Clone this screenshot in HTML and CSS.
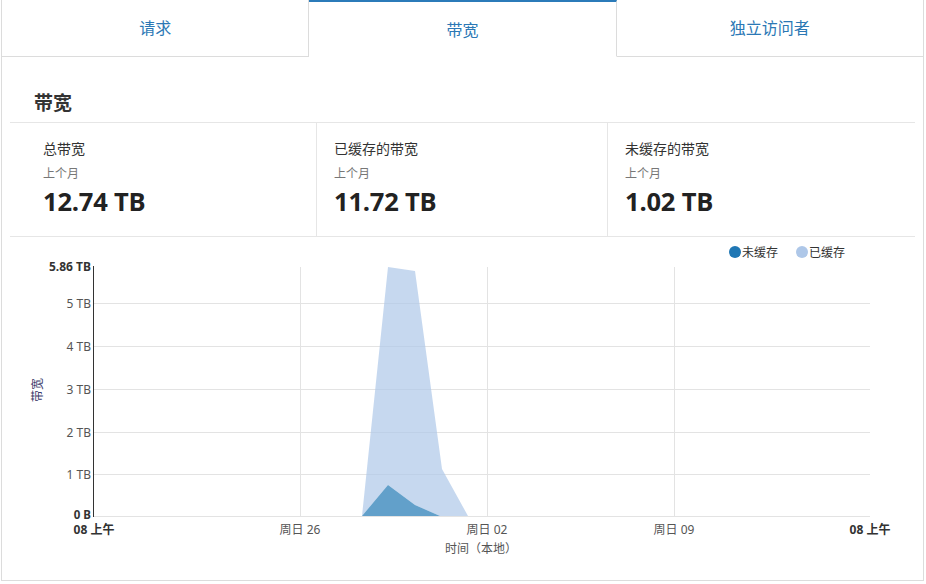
FILE: index.html
```html
<!DOCTYPE html>
<html lang="zh-CN">
<head>
<meta charset="utf-8">
<title>带宽</title>
<link rel="stylesheet" href="styles.css">
</head>
<body>
<div class="wrap">
  <div class="tabs">
    <div class="tab first">请求</div>
    <div class="tab active">带宽</div>
    <div class="tab last">独立访问者</div>
  </div>
  <div class="panel">
    <h2 class="title">带宽</h2>
    <div class="stats">
      <div class="stat s1">
        <div class="label">总带宽</div>
        <div class="sub">上个月</div>
        <div class="num">12.74 TB</div>
      </div>
      <div class="stat">
        <div class="label">已缓存的带宽</div>
        <div class="sub">上个月</div>
        <div class="num">11.72 TB</div>
      </div>
      <div class="stat">
        <div class="label">未缓存的带宽</div>
        <div class="sub">上个月</div>
        <div class="num">1.02 TB</div>
      </div>
    </div>
    <svg class="chart" width="904" height="343" viewBox="10 237 904 343" xmlns="http://www.w3.org/2000/svg">
      <g class="legend">
        <circle cx="735" cy="252" r="6" fill="#1f77b4"/>
        <text x="742" y="256.5">未缓存</text>
        <circle cx="802" cy="252" r="6" fill="#aec7e8"/>
        <text x="809" y="256.5">已缓存</text>
      </g>
      <g class="grid">
        <line x1="93" y1="303.5" x2="870" y2="303.5"/>
        <line x1="93" y1="346.5" x2="870" y2="346.5"/>
        <line x1="93" y1="389.5" x2="870" y2="389.5"/>
        <line x1="93" y1="432.5" x2="870" y2="432.5"/>
        <line x1="93" y1="474.5" x2="870" y2="474.5"/>
        <line x1="93" y1="516.5" x2="870" y2="516.5"/>
        <line x1="300.5" y1="267" x2="300.5" y2="516"/>
        <line x1="487.5" y1="267" x2="487.5" y2="516"/>
        <line x1="674.5" y1="267" x2="674.5" y2="516"/>
      </g>
      <polygon class="cached" points="362,516 388,267 415,271 442,469 468,516 440,516 415,505 388,485"/>
      <polygon class="uncached" points="362,516 388,485 415,505 440,516"/>
      <line class="axis" x1="93.5" y1="266" x2="93.5" y2="517"/>
      <g class="ylab">
        <text class="b" x="91" y="271">5.86 TB</text>
        <text x="91" y="307.5">5 TB</text>
        <text x="91" y="350.5">4 TB</text>
        <text x="91" y="393.5">3 TB</text>
        <text x="91" y="436.5">2 TB</text>
        <text x="91" y="478.5">1 TB</text>
        <text class="b zero" x="91" y="519">0 B</text>
      </g>
      <g class="xlab">
        <text class="b" x="94" y="534">08 上午</text>
        <text x="300" y="534">周日 26</text>
        <text x="487" y="534">周日 02</text>
        <text x="674" y="534">周日 09</text>
        <text class="b" x="870" y="534">08 上午</text>
      </g>
      <text class="xtitle" x="481" y="552.5">时间（本地）</text>
      <text class="ytitle" transform="translate(42 390) rotate(-90)">带宽</text>
    </svg>
  </div>
</div>
</body>
</html>
```

FILE: styles.css
```css
* { box-sizing: border-box; }
html, body { margin: 0; padding: 0; background: #fff; }
body {
  font-family: "Noto Sans", "Noto Sans CJK SC", sans-serif;
  color: #333;
}
.wrap {
  width: 923px;
  margin-left: 1px;
}
.tabs {
  display: flex;
  height: 57px;
}
.tab {
  flex: 1;
  display: flex;
  align-items: center;
  justify-content: center;
  font-family: "Noto Sans CJK SC", sans-serif;
  font-size: 16px;
  color: #2b78b5;
  background: #fff;
  border-bottom: 1px solid #dcdcdc;
  border-right: 1px solid #dcdcdc;
  padding-bottom: 2px;
}
.tab.first { border-left: 1px solid #dcdcdc; }
.tab.active {
  border-top: 2px solid #2b7bb9;
  border-bottom-color: #fff;
  padding-bottom: 0;
}
.panel {
  border: 1px solid #dcdcdc;
  border-top: none;
  padding: 0 8px;
  height: 524px;
}
.title {
  margin: 0;
  padding: 33px 0 0 24px;
  height: 65px;
  font-family: "Noto Sans CJK SC", sans-serif;
  font-size: 19px;
  line-height: 24px;
  font-weight: 700;
  color: #333;
}
.stats {
  display: grid;
  grid-template-columns: 306px 291px 1fr;
  border-top: 1px solid #e6e6e6;
  border-bottom: 1px solid #e6e6e6;
  height: 115px;
}
.stat {
  padding: 15px 0 0 17px;
  border-left: 1px solid #e6e6e6;
}
.stat.s1 {
  border-left: none;
  padding-left: 33px;
}
.label {
  font-family: "Noto Sans CJK SC", sans-serif;
  font-size: 14px;
  line-height: 20px;
  color: #333;
}
.sub {
  margin-top: 5px;
  font-family: "Noto Sans CJK SC", sans-serif;
  font-size: 12px;
  line-height: 20px;
  color: #777;
}
.num {
  margin-top: 2px;
  font-family: "Open Sans", "Noto Sans", sans-serif;
  font-size: 25.5px;
  line-height: 32px;
  font-weight: 700;
  color: #222;
  letter-spacing: -0.2px;
}
.chart {
  display: block;
  font-family: "Noto Sans", "Noto Sans CJK SC", sans-serif;
}
.chart text { font-size: 12px; fill: #444; }
.legend text { fill: #333; font-family: "Noto Sans CJK SC", sans-serif; }
.grid line { stroke: #e3e3e3; stroke-width: 1; }
.axis { stroke: #333; stroke-width: 1; }
.cached { fill: #aec7e8; fill-opacity: 0.7; }
.uncached { fill: #1f77b4; fill-opacity: 0.7; }
.ylab text { text-anchor: end; fill: #555; }
.xlab text { text-anchor: middle; fill: #555; }
.chart text.b { font-weight: 700; fill: #333; }
.chart text.zero { font-size: 11.5px; }
.chart .xtitle { text-anchor: middle; fill: #555; font-family: "Noto Sans CJK SC", sans-serif; }
.chart .ytitle { text-anchor: middle; fill: #3a3a6a; font-family: "Noto Sans CJK SC", sans-serif; }
```
